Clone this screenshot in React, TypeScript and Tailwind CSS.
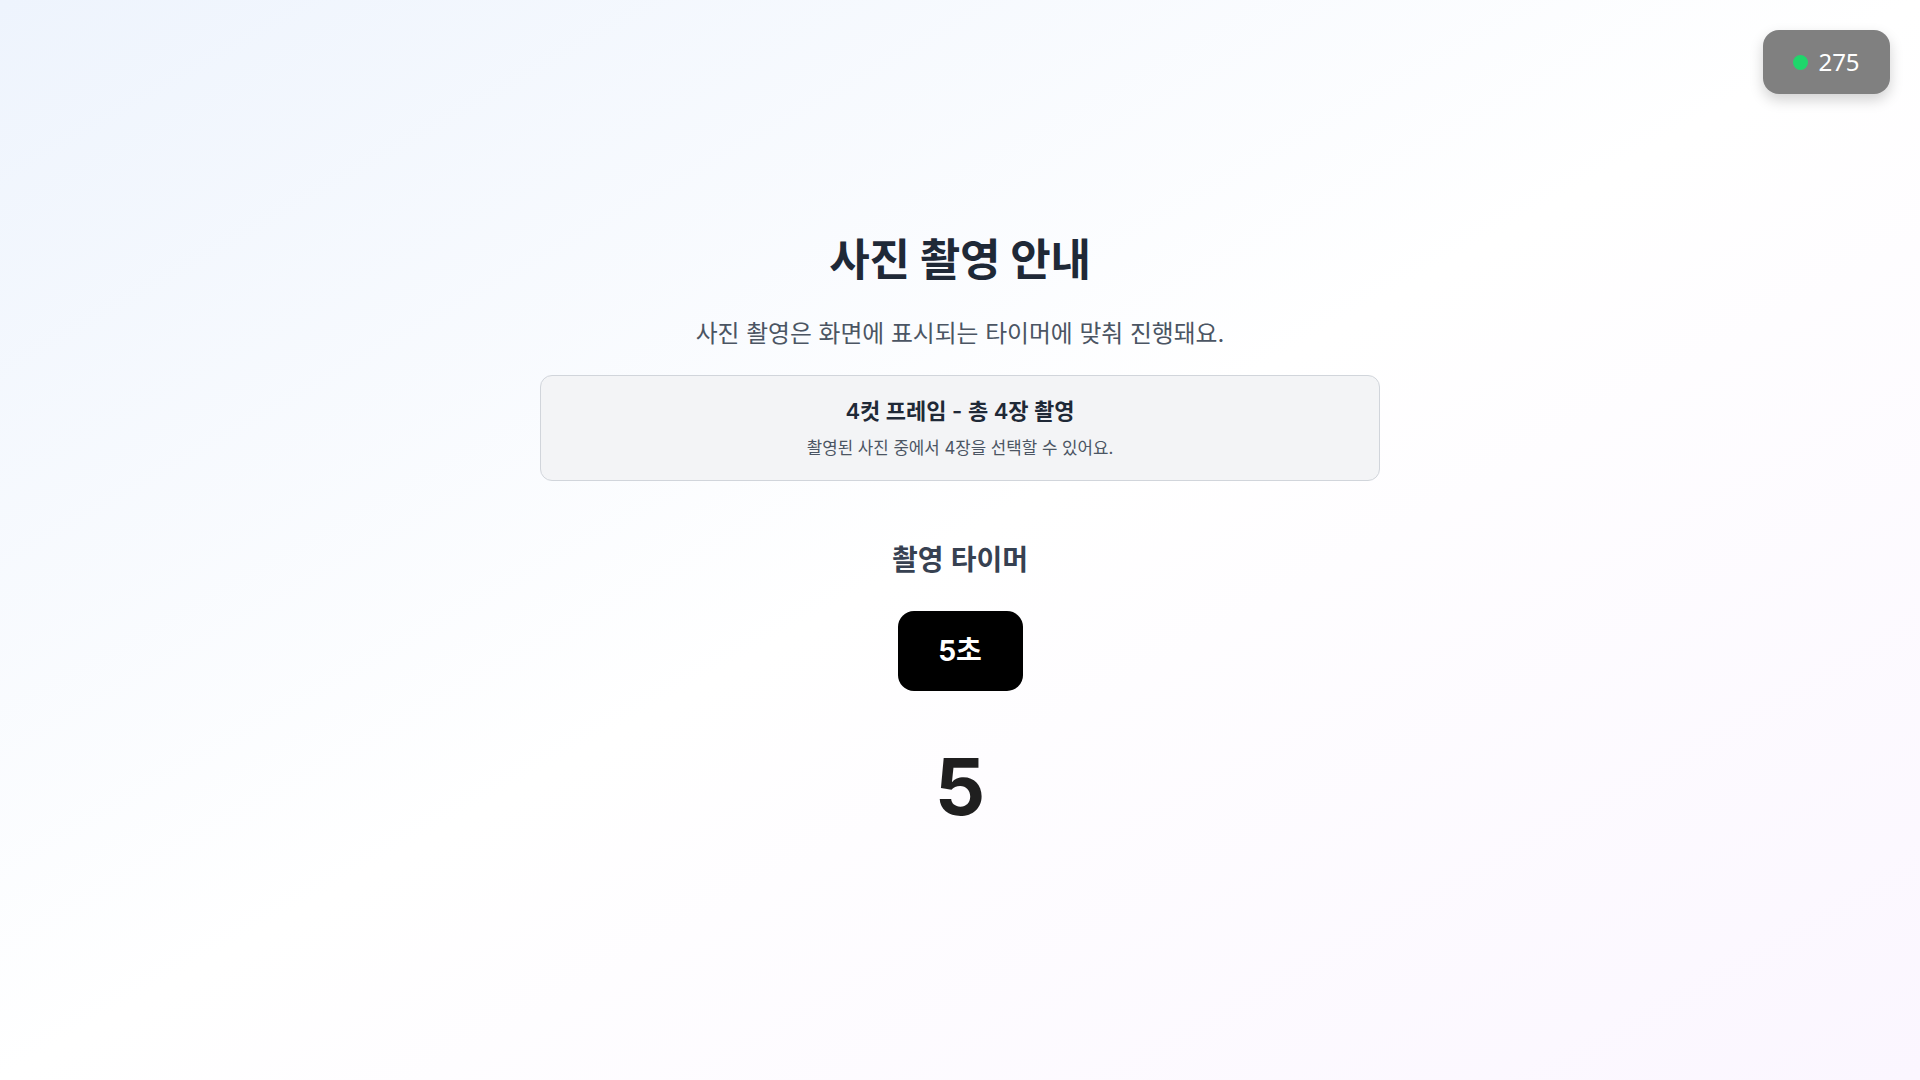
const CJK = 'font-["Inter","Noto_Sans_CJK_KR",sans-serif]';

const StatusBadge = ({ count }: { count: number }) => (
  <div className="absolute top-[30px] right-[30px] flex h-[64px] w-[127px] items-center justify-center gap-[10px] rounded-2xl bg-[#808080] shadow-[0_6px_14px_rgba(0,0,0,0.18)]">
    <span className="h-[15px] w-[15px] rounded-full bg-[#1fd66b]" />
    <span className='font-["Noto_Sans","Open_Sans",sans-serif] text-[24px] leading-none text-white'>
      {count}
    </span>
  </div>
);

export default function App() {
  return (
    <div
      className={`relative min-h-screen w-full bg-linear-to-br from-[#eef4fd] via-white to-[#fbf6ff] ${CJK}`}
    >
      <StatusBadge count={275} />

      <div className="flex flex-col items-center pt-[232px]">
        <h1 className="text-[44px] leading-[56px] font-bold tracking-[-0.3px] text-[#1f2937]">
          사진 촬영 안내
        </h1>
        <p className="mt-[30px] text-[23.8px] leading-[32px] text-[#4b5563]">
          사진 촬영은 화면에 표시되는 타이머에 맞춰 진행돼요.
        </p>

        <div className="mt-[25px] w-[840px] rounded-xl border border-[#d1d5db] bg-[#f3f4f6] pt-[20px] pb-[20px] text-center">
          <div className="text-[22px] leading-[30px] font-semibold text-[#1f2937]">
            4컷 프레임 - 총 4장 촬영
          </div>
          <div className="mt-[10px] text-[16.8px] leading-[24px] text-[#4b5563]">
            촬영된 사진 중에서 4장을 선택할 수 있어요.
          </div>
        </div>

        <h2 className="mt-[61px] text-[28px] leading-[36px] font-semibold text-[#374151]">
          촬영 타이머
        </h2>

        <button className="mt-[33px] flex h-[80px] w-[125px] items-center justify-center rounded-2xl bg-black text-[28px] font-bold text-white">
          5초
        </button>

        <div className="mt-[56px] text-[79px] leading-none font-bold text-[#1f1f1f]">
          5
        </div>
      </div>
    </div>
  );
}
